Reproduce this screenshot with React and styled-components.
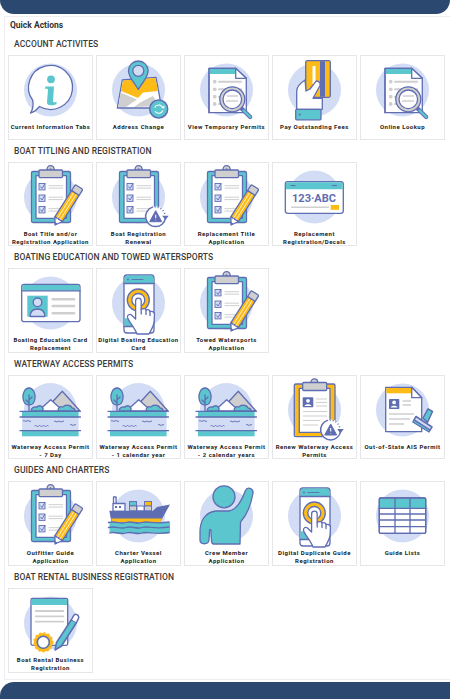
import React from 'react';
import styled, { createGlobalStyle } from 'styled-components';

const INK = '#5f6db3';
const TEAL = '#5cc6cf';
const GOLD = '#fdbb18';
const HALO = '#d2dcf5';
const GREY = '#cfcfcf';

const GlobalStyle = createGlobalStyle`
  html, body { margin: 0; padding: 0; background: #fff; }
  body { font-family: Roboto, "Liberation Sans", sans-serif; overflow: hidden; }
`;

const Page = styled.div`
  display: flex;
  flex-direction: column;
  width: 450px;
  height: 699px;
  overflow: hidden;
`;

const TopBar = styled.div`
  flex: none;
  height: 14px;
  background: #2b4870;
  border-radius: 0 0 14px 14px;
`;

const Panel = styled.main`
  flex: none;
  margin: 2px 0 0 4px;
  padding: 0 0 7px 3px;
  border: 1px solid #eeeef2;
  border-right: 0;
  height: 664px;
  box-sizing: border-box;
`;

const PanelTitle = styled.div`
  height: 16px;
  line-height: 16px;
  padding-left: 2px;
  font-size: 8.5px;
  font-weight: 700;
  color: #333;
`;

const SectionTitle = styled.h3`
  margin: 0;
  height: 22px;
  line-height: 22px;
  padding-left: 6px;
  font-size: 8.5px;
  font-weight: 500;
  color: #3a3a3a;
  letter-spacing: 0.1px;
`;

const Grid = styled.div`
  display: grid;
  grid-template-columns: repeat(5, 85px);
  column-gap: 3px;
`;

const Card = styled.a`
  display: block;
  box-sizing: border-box;
  height: 84.6px;
  border: 1px solid #e6e6e8;
  background: #fff;
  text-align: center;
  overflow: hidden;
`;

const Art = styled.svg`
  display: block;
  width: 83px;
  height: 66px;
`;

const Label = styled.div`
  font-size: 6px;
  font-weight: 700;
  line-height: 8px;
  letter-spacing: 0.5px;
  color: #222;
  margin-top: 1px;
  white-space: pre-line;
`;

const Footer = styled.div`
  flex: none;
  margin-top: 2px;
  height: 17px;
  background: #2b4870;
  border-radius: 14px 0 0 0;
`;

const line = { stroke: INK, strokeWidth: 1.3, strokeLinejoin: 'round', strokeLinecap: 'round' };
const bar = { stroke: GREY, strokeWidth: 1.5, strokeLinecap: 'round' };

const Halo = () => <circle cx="42.5" cy="35" r="26.5" fill={HALO} />;

const Pencil = () => (
  <g transform="translate(47 63) rotate(32.4)">
    <path d="M-4.5 -7 L0 0 L4.5 -7 Z" fill="#fff" {...line} />
    <path d="M-1.6 -2.5 L0 0 L1.6 -2.5 Z" fill={INK} />
    <rect x="-4.5" y="-38" width="9" height="31" fill={GOLD} {...line} />
    <path d="M-1.5 -38 V-7 M1.5 -38 V-7" stroke="#fff" strokeWidth="0.7" />
    <rect x="-4.5" y="-45" width="9" height="7" rx="1.2" fill={GREY} {...line} />
  </g>
);

const Checks = () => (
  <g>
    {[21.5, 33, 44.5].map((y) => (
      <g key={y}>
        <rect x="31" y={y} width="6" height="6.4" fill={HALO} stroke={INK} strokeWidth="0.9" />
        <path d={`M32.5 ${y + 3} l1.5 2 l3 -5`} fill="none" stroke={INK} strokeWidth="0.9" />
        <path d={`M40.5 ${y + 2.2} H55 M40.5 ${y + 4.6} H55`} stroke={GREY} strokeWidth="1" />
      </g>
    ))}
  </g>
);

const Board = ({ fill = TEAL }) => (
  <g>
    <rect x="23.5" y="9.5" width="39" height="51" rx="1.5" fill={fill} {...line} />
    <rect x="28" y="13.7" width="30.5" height="42.6" fill="#fff" {...line} />
    <circle cx="42.6" cy="7.2" r="3.6" fill={GREY} {...line} />
    <rect x="31" y="8" width="23.5" height="7.6" rx="1" fill={GREY} {...line} />
    <circle cx="42.6" cy="7.2" r="0.9" fill={INK} />
  </g>
);

const Renew = ({ cx, cy }) => (
  <g transform={`translate(${cx} ${cy})`}>
    <circle r="10.5" fill="#fff" />
    <path d="M-3.2 -9.6 A10 10 0 1 0 9.8 1.5" fill="none" stroke={INK} strokeWidth="1.5" strokeLinecap="round" />
    <path d="M-1 -9.8 A10 10 0 0 1 9.4 -1" fill="none" stroke={INK} strokeWidth="1.5" strokeDasharray="1 2" />
    <path d="M6.5 -1 H13 L9.7 3.4 Z" fill={INK} />
    <path d="M0 -6 L6 5 H-6 Z" fill={INK} stroke={INK} strokeLinejoin="round" />
    <path d="M0 -2 V1.5 M0 3 V3.6" stroke="#fff" strokeWidth="1.1" />
  </g>
);

const Scope = () => (
  <g>
    <path d="M57.3 53.3 L66.2 62" stroke={INK} strokeWidth="4.2" strokeLinecap="round" />
    <path d="M59.5 55.4 L66.2 62" stroke={TEAL} strokeWidth="2.2" strokeLinecap="round" />
    <circle cx="48.3" cy="44.3" r="12.5" fill={GREY} {...line} />
    <circle cx="48.3" cy="44.3" r="9.3" fill="#fff" {...line} />
    <path d="M43 41 H54 M42 46 H54" stroke={GREY} strokeWidth="1.5" />
  </g>
);

const Lookup = () => (
  <>
    <Halo />
    <path d="M25 13.3 H51.7 L62.3 23.3 V57.7 H25 Z" fill="#fff" {...line} />
    <path d="M25 13.3 H51.7 V19 H25 Z" fill={TEAL} />
    <path d="M51.7 13.3 V23.3 H62.3 Z" fill="#fff" {...line} />
    <path d="M25 13.3 H51.7 M25 13.3 V57.7" {...line} />
    {[26.7, 34.3, 41.7, 49].map((y) => (
      <g key={y}>
        <circle cx="30.7" cy={y} r="1.9" fill={GREY} />
        <path d={`M35 ${y} H57`} {...bar} strokeWidth="2" />
      </g>
    ))}
    <Scope />
  </>
);

const Info = () => (
  <>
    <Halo />
    <path d="M24.8 45.5 A22 22 0 1 1 31.5 51.5 C29 54.5 26.5 57 22.5 58 C24.8 54.5 25.5 50 24.8 45.5 Z" fill="#fff" stroke={INK} strokeWidth="1.3" strokeLinejoin="round" />
    <circle cx="43" cy="24.3" r="3.9" fill={TEAL} />
    <path d="M37.2 31.5 H46 L45 46 C45 47.5 46.5 48 48.5 46.5 L48.5 49 C46 50.5 38.5 51.5 39 47 L40 35 C40 33.5 38.5 33.5 37.2 34 Z" fill={TEAL} />
  </>
);

const MapPin = () => (
  <>
    <Halo />
    <path d="M26.3 25 L60 22.3 L65.7 53 H21.3 Z" fill="#fff" {...line} />
    <path d="M27 25.5 L59.5 23 L62 36 L47 37.5 L42 43 L25 36 Z" fill={GOLD} />
    <path d="M24.5 37.5 L41 44.5 L30 52 H22.5 Z M45 47 L57 41 L63 51 L38 52 Z" fill={GREY} />
    <path d="M42.3 34.5 C39 28 32.5 23 32.5 15.8 A9.8 9.8 0 0 1 52.1 15.8 C52.1 23 45.5 28 42.3 34.5 Z" fill={TEAL} {...line} />
    <circle cx="42.3" cy="15.8" r="5.5" fill={HALO} {...line} />
    <circle cx="62.7" cy="54" r="9" fill={TEAL} {...line} strokeWidth="1.5" />
    <path d="M58.7 52.5 A4.4 4.4 0 0 1 66.8 53 M66.8 55.5 A4.4 4.4 0 0 1 59 56.3" fill="none" stroke="#fff" strokeWidth="1.1" />
    <path d="M65.3 52.5 L68 53.8 L68.8 50.8 Z" fill="#fff" />
  </>
);

const CardHand = () => (
  <>
    <Halo />
    <rect x="33.7" y="5.7" width="24.6" height="36.6" rx="1.5" fill={GOLD} {...line} />
    <rect x="48" y="6.2" width="5" height="35.6" fill={INK} />
    <path d="M42 11 V29" stroke="#fff" strokeWidth="3" />
    <path d="M24.7 54.3 V35.7 C25 31 30 27 33 25 C33.5 29 33.5 32 34 36 L38 34 L43.5 26.8 C45 25 49 27 48 30.5 L41 43.3 H50.3 V54.3 Z" fill="#fff" {...line} />
    <rect x="23.7" y="54.3" width="25.3" height="10.5" rx="1" fill={TEAL} {...line} />
    <circle cx="27.8" cy="59.5" r="1.1" fill={INK} />
  </>
);

const TitleForm = () => (
  <>
    <Halo />
    <Board />
    <Checks />
    <Pencil />
  </>
);

const Renewal = () => (
  <>
    <Halo />
    <Board />
    <Checks />
    <Renew cx={59.7} cy={54.7} />
  </>
);

const Plate = () => (
  <>
    <Halo />
    <rect x="13.3" y="19.7" width="58" height="31.6" rx="2.5" fill="#fff" {...line} />
    <path d="M13.9 27.3 V22 A1.8 1.8 0 0 1 15.7 20.3 H69 A1.8 1.8 0 0 1 70.7 22 V27.3 Z" fill={TEAL} />
    <path d="M19 23.5 H23 M60.5 23.5 H64.5" stroke={INK} strokeWidth="1.1" strokeLinecap="round" />
    <text x="42" y="39.6" textAnchor="middle" fontFamily="Roboto, sans-serif" fontWeight="700" fontSize="11" fill={INK}>123·ABC</text>
    <path d="M19.7 45.3 H56.3" {...bar} />
    <rect x="58.7" y="43" width="8.3" height="4.8" fill={GOLD} />
  </>
);

const IdCard = () => (
  <>
    <Halo />
    <rect x="13.7" y="16.3" width="58.3" height="37.4" rx="2.5" fill="#fff" {...line} />
    <path d="M14.3 22.7 V18.5 A1.8 1.8 0 0 1 16 17 H70 A1.8 1.8 0 0 1 71.4 18.5 V22.7 Z" fill={TEAL} />
    <path d="M14 22.9 H72" {...line} />
    <rect x="19.3" y="27.7" width="20.4" height="21" fill={TEAL} />
    <circle cx="29.5" cy="34.3" r="4.3" fill={HALO} {...line} />
    <path d="M22.2 48.5 C22.2 43 25 41 29.5 41 C34 41 36.8 43 36.8 48.5 Z" fill={HALO} {...line} />
    <path d="M44.7 31.3 H66 M44.7 38 H66 M44.7 45.3 H66" stroke={GREY} strokeWidth="2.6" strokeLinecap="round" />
  </>
);

const Phone = () => (
  <>
    <Halo />
    <rect x="28" y="7" width="30" height="58" rx="3" fill="#fff" {...line} />
    <path d="M28.6 15.5 V10 A2.4 2.4 0 0 1 31 7.6 H55 A2.4 2.4 0 0 1 57.4 10 V15.5 Z" fill={TEAL} />
    <path d="M28 15.5 H58" {...line} />
    <rect x="28.6" y="50.3" width="29" height="8.5" fill={TEAL} />
    <path d="M28 58.5 H40" {...line} />
    <path d="M36 11.5 H47" stroke={INK} strokeWidth="0.9" strokeLinecap="round" />
    <circle cx="32" cy="11.5" r="0.9" fill={INK} />
    <circle cx="42.3" cy="32" r="11" fill={GOLD} {...line} />
    <circle cx="42.3" cy="32" r="6.5" fill="#fff" {...line} />
    <path d="M39.6 33 A2.8 2.8 0 0 1 45.2 33 V41.5 C47 40 50 40.5 50 42 C52 41 54 42 54 43.5 C56 43 58 44 58.5 46 L58 55 C57 60 55 62 53 66 H41 C39 60 33 54 31.5 49.5 C31 47 33.5 45.5 35.5 47 L39.6 51 Z" fill="#fff" {...line} />
    <path d="M45.2 41.5 V46 M50 42 V46.5 M54 43.5 V47.5" {...line} />
  </>
);

const Waterway = () => (
  <>
    <path d="M16 36 A26.5 28 0 0 1 69 36 Z" fill={HALO} />
    <path d="M36 36 L54.3 16.3 L72 36 Z" fill={GREY} {...line} />
    <path d="M30.3 36 L42.7 24.7 L55.3 36 Z" fill="#fff" {...line} />
    <path d="M21 13 C16.5 13 14.5 19 15 23 C15.5 28 18 30 21 30 C24 30 26.5 28 27 23 C27.5 19 25.5 13 21 13 Z" fill={TEAL} {...line} />
    <path d="M21 20 V36 M21 25 L24 22 M21 28 L18 25" fill="none" {...line} />
    <path d="M23 36 C23 32 27 31.5 29 32 C31 29.5 36 31 35 36 Z" fill={TEAL} {...line} />
    <path d="M50 36 C50 32 53 31 55 32 C57 29 63 30 64 33 C66 33 67 34.5 67 36 Z" fill={TEAL} {...line} />
    <rect x="14" y="36.3" width="56.6" height="5.7" fill={TEAL} />
    <rect x="14" y="42" width="56.6" height="13.7" fill={HALO} />
    <rect x="14" y="55.7" width="56.6" height="5.6" fill={TEAL} />
    <path d="M12 36.3 H72.5 M12 42 H72.5 M12 55.7 H72.5" {...line} />
    <path d="M15 46 q1 -1 2 0 t2 0 t2 0 t2 0 M46 46.5 q1 -1 2 0 t2 0 t2 0 t2 0 t2 0 M26.5 51 q1 -1 2 0 t2 0 t2 0 t2 0 t2 0 t2 0 t2 0 M62 50 q1 -1 2 0 t2 0 t2 0" fill="none" stroke={INK} strokeWidth="0.9" />
  </>
);

const RenewPermit = () => (
  <>
    <Halo />
    <rect x="22.3" y="9" width="40.7" height="52.7" rx="1.5" fill={GOLD} {...line} />
    <rect x="27.3" y="13.3" width="30.7" height="44" fill="#fff" {...line} />
    <circle cx="42.3" cy="7.3" r="3.4" fill={GREY} {...line} />
    <rect x="30.7" y="7.5" width="24" height="8" rx="1" fill={GREY} {...line} />
    <rect x="30.7" y="22.3" width="10.6" height="10" rx="0.8" fill={INK} />
    <circle cx="36" cy="25.8" r="1.9" fill="#fff" />
    <path d="M32.6 31 C32.6 28.6 39.4 28.6 39.4 31 Z" fill="#fff" />
    <path d="M44 24 H55 M44 27.5 H55 M44 31 H55 M31 36.5 H55 M31 41 H55 M31 45.5 H48 M31 50 H46" stroke={GREY} strokeWidth="1.1" />
    <Renew cx={58.7} cy={55} />
  </>
);

const Stamp = () => (
  <>
    <Halo />
    <path d="M25.7 12.3 H51.7 L61.7 22.7 V56.7 H25.7 Z" fill="#fff" {...line} />
    <path d="M26.3 13 H51.7 V18.3 H26.3 Z" fill={GOLD} />
    <path d="M51.7 12.3 V22.7 H61.7 Z" fill="#fff" {...line} />
    <rect x="29" y="24" width="10.3" height="10" rx="0.8" fill={INK} />
    <circle cx="34.1" cy="27.4" r="1.9" fill="#fff" />
    <path d="M30.8 32.6 C30.8 30.2 37.4 30.2 37.4 32.6 Z" fill="#fff" />
    <path d="M42.5 26 H51 M42.5 30 H51 M29 39 H54 M29 44 H50 M29 49 H44" stroke={GREY} strokeWidth="1.4" />
    <path d="M63 43 L68 33.8 L72.5 36.5 L67.5 47.5 Z" fill={TEAL} {...line} strokeWidth="1.5" />
    <path d="M54 44.8 L56 41.5 L72 52 L70 55.2 Z" fill={HALO} {...line} strokeWidth="1.5" />
    <path d="M52.8 47 L54 45 L70 55 L69 57 Z" fill={TEAL} {...line} />
  </>
);

const Ship = () => (
  <>
    <Halo />
    <rect x="17.5" y="16" width="2.6" height="7" fill="#fff" {...line} />
    <rect x="17" y="22.5" width="12" height="8" fill="#fff" {...line} />
    <rect x="19" y="25" width="2" height="2" fill={INK} />
    <rect x="23" y="25" width="2" height="2" fill={INK} />
    <rect x="33.5" y="20.5" width="7" height="4.5" fill={TEAL} stroke={INK} strokeWidth="0.9" />
    <rect x="33.5" y="25" width="7" height="4.8" fill={GREY} stroke={INK} strokeWidth="0.9" />
    <rect x="41" y="25" width="7" height="4.8" fill="#fff" stroke={INK} strokeWidth="0.9" />
    <rect x="48.5" y="20.5" width="7" height="4.5" fill={GOLD} stroke={INK} strokeWidth="0.9" />
    <rect x="48.5" y="25" width="7" height="4.8" fill={GREY} stroke={INK} strokeWidth="0.9" />
    <path d="M13.3 29.7 H57 L61 26 L74 23.5 L64 41.5 H15.5 Z" fill={INK} />
    <path d="M15.2 37.5 H66 L64 41.5 H16 Z" fill={GOLD} />
    <path d="M13.5 41.5 C20 39.5 24 43.5 30 41.5 C36 39.5 40 43.5 46 41.5 C52 39.5 58 43.5 74 41 V52 C66 54 60 50 52 52 C44 54 38 50 30 52 C24 53.5 18 52 13.5 51 Z" fill={TEAL} />
    <path d="M12.5 41.5 C20 39.5 24 43.5 30 41.5 C36 39.5 40 43.5 46 41.5 C52 39.5 58 43.5 73 41 M12.5 46.5 C20 44.5 24 48.5 30 46.5 C36 44.5 40 48.5 46 46.5 C52 44.5 58 48.5 73 46 M13.5 52 C20 50 24 54 30 52 C36 50 40 54 46 52 C52 50 58 54 73 51.5" fill="none" {...line} />
  </>
);

const Crew = () => (
  <>
    <Halo />
    <circle cx="40" cy="15.8" r="11" fill={TEAL} {...line} />
    <path d="M16 51 C16 40 21 31 32 30 L45 30 C52 29 58 19 61.5 9.5 C63 5.5 69.5 7 69 12 C67 24 62 35 56.5 41 L56 63 L30 63 C28 63 27.5 62 27.5 60 L27 50 C27 48 25.5 48 25.5 50 L25 59 C24.5 64 16 64 16 59 Z" fill={TEAL} {...line} />
  </>
);

const Table = () => (
  <>
    <Halo />
    <rect x="19.3" y="17" width="46.4" height="35.3" rx="1.2" fill="#fff" {...line} />
    <rect x="19.9" y="17.6" width="45.2" height="9.7" fill={TEAL} />
    <path d="M19.3 27.3 H65.7 M19.3 33 H65.7 M19.3 39 H65.7 M19.3 45.7 H65.7 M35 17 V52.3 M50 17 V52.3" {...line} />
    <rect x="19.3" y="17" width="46.4" height="35.3" rx="1.2" fill="none" {...line} />
  </>
);

const Certificate = () => (
  <>
    <Halo />
    <rect x="23" y="10.3" width="36.7" height="47" rx="1.5" fill="#fff" {...line} />
    <path d="M23.6 17 V12 A1 1 0 0 1 24.6 11 H58 A1 1 0 0 1 59 12 V17 Z" fill={TEAL} />
    <path d="M27.7 23 H55.3 M27.7 28.3 H55.3 M27.7 33.7 H55.3" stroke={GREY} strokeWidth="1.8" strokeLinecap="round" />
    <circle cx="35.3" cy="54.3" r="9.4" fill={GOLD} stroke={GOLD} strokeWidth="1.5" strokeDasharray="2.2 2.2" />
    <circle cx="35.3" cy="54.3" r="8" fill={GOLD} />
    <circle cx="35.3" cy="54.3" r="6" fill="#fff" stroke={INK} strokeWidth="1.6" />
    <path d="M47 62 L48.5 54.5 L63.5 31.5 L68.5 34.5 L53.5 58 Z" fill={TEAL} {...line} strokeWidth="1.5" />
    <path d="M63.5 31.5 L65.5 27.8 A2.6 2.6 0 0 1 70.3 30.8 L68.5 34.5" fill="#fff" {...line} strokeWidth="1.5" />
  </>
);

const sections = [
  {
    title: 'ACCOUNT ACTIVITES',
    items: [
      ['Current Information Tabs', Info],
      ['Address Change', MapPin],
      ['View Temporary Permits', Lookup],
      ['Pay Outstanding Fees', CardHand],
      ['Online Lookup', Lookup],
    ],
  },
  {
    title: 'BOAT TITLING AND REGISTRATION',
    items: [
      ['Boat Title and/or\nRegistration Application', TitleForm],
      ['Boat Registration\nRenewal', Renewal],
      ['Replacement Title\nApplication', TitleForm],
      ['Replacement\nRegistration/Decals', Plate],
    ],
  },
  {
    title: 'BOATING EDUCATION AND TOWED WATERSPORTS',
    items: [
      ['Boating Education Card\nReplacement', IdCard],
      ['Digital Boating Education\nCard', Phone],
      ['Towed Watersports\nApplication', TitleForm],
    ],
  },
  {
    title: 'WATERWAY ACCESS PERMITS',
    items: [
      ['Waterway Access Permit\n- 7 Day', Waterway],
      ['Waterway Access Permit\n- 1 calendar year', Waterway],
      ['Waterway Access Permit\n- 2 calendar years', Waterway],
      ['Renew Waterway Access\nPermits', RenewPermit],
      ['Out-of-State AIS Permit', Stamp],
    ],
  },
  {
    title: 'GUIDES AND CHARTERS',
    items: [
      ['Outfitter Guide\nApplication', TitleForm],
      ['Charter Vessel\nApplication', Ship],
      ['Crew Member\nApplication', Crew],
      ['Digital Duplicate Guide\nRegistration', Phone],
      ['Guide Lists', Table],
    ],
  },
  {
    title: 'BOAT RENTAL BUSINESS REGISTRATION',
    items: [['Boat Rental Business\nRegistration', Certificate]],
  },
];

export default function App() {
  return (
    <Page>
      <GlobalStyle />
      <TopBar />
      <Panel>
        <PanelTitle>Quick Actions</PanelTitle>
        {sections.map((section) => (
          <section key={section.title}>
            <SectionTitle>{section.title}</SectionTitle>
            <Grid>
              {section.items.map(([label, Icon]) => (
                <Card key={label}>
                  <Art viewBox="1 1 83 66">
                    <Icon />
                  </Art>
                  <Label>{label}</Label>
                </Card>
              ))}
            </Grid>
          </section>
        ))}
      </Panel>
      <Footer />
    </Page>
  );
}
